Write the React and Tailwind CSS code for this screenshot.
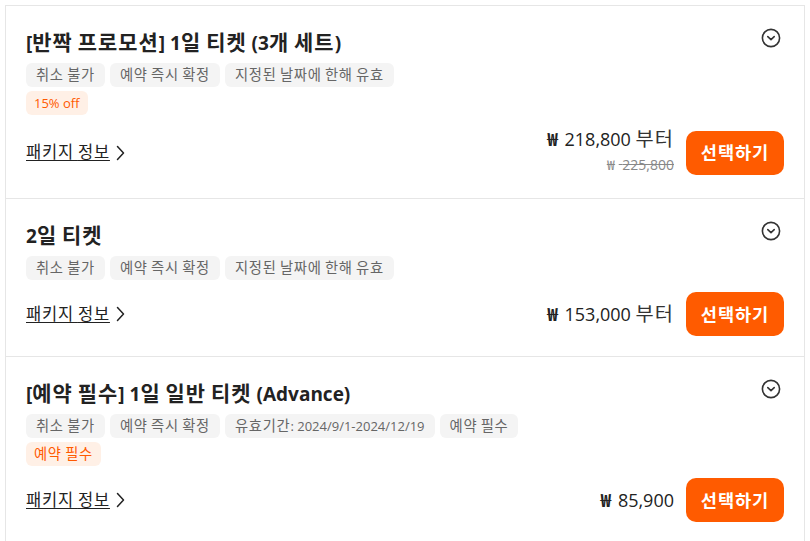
const FONT = { fontFamily: '"Open Sans", "Noto Sans CJK KR", sans-serif' };

const packages = [
    {
        title: '[반짝 프로모션] 1일 티켓 (3개 세트)',
        tags: ['취소 불가', '예약 즉시 확정', '지정된 날짜에 한해 유효'],
        promo: '15% off',
        price: '218,800',
        from: true,
        original: '225,800',
    },
    {
        title: '2일 티켓',
        tags: ['취소 불가', '예약 즉시 확정', '지정된 날짜에 한해 유효'],
        price: '153,000',
        from: true,
    },
    {
        title: '[예약 필수] 1일 일반 티켓 (Advance)',
        tags: ['취소 불가', '예약 즉시 확정', '유효기간: 2024/9/1-2024/12/19', '예약 필수'],
        promo: '예약 필수',
        price: '85,900',
    },
];

// hangul in the fallback font runs narrow, widen it a bit to match
function Ko({ children }) {
    const parts = String(children).split(/([가-힣]+)/);
    return parts.map((p, i) =>
        /[가-힣]/.test(p) ? (
            <span key={i} className="text-[1.1em] tracking-[0.05em]">{p}</span>
        ) : (
            <span key={i}>{p}</span>
        )
    );
}

function CircleChevron() {
    return (
        <svg width="20" height="20" viewBox="0 0 20 20" fill="none" stroke="#333" strokeWidth="1.6" strokeLinecap="round" strokeLinejoin="round">
            <circle cx="10" cy="10" r="8.6" />
            <path d="M6.8 8.6 10 11.6 13.2 8.6" />
        </svg>
    );
}

function PackageCard({ pkg }) {
    return (
        <div className="border-b border-[#e6e6e6] px-5 pt-6 pb-5">
            <div className="flex h-6 items-start justify-between">
                <h3 className="h-6 text-[19px] leading-6 font-bold text-[#222] whitespace-nowrap"><Ko>{pkg.title}</Ko></h3>
                <div className="mr-[3px] -mt-[2px]">
                    <CircleChevron />
                </div>
            </div>

            <div className="mt-[9px] flex flex-wrap gap-[5px]">
                {pkg.tags.map((t, i) => (
                    <span key={i} className="h-6 px-2.5 rounded-md bg-[#f4f4f4] text-[13px] leading-6 text-[#666] whitespace-nowrap">
                        <Ko>{t}</Ko>
                    </span>
                ))}
            </div>
            {pkg.promo && (
                <div className="mt-1 flex">
                    <span className="h-6 px-2 rounded-md bg-[#fff0e6] text-[13px] leading-6 text-[#ff5a00]">
                        <Ko>{pkg.promo}</Ko>
                    </span>
                </div>
            )}

            <div className="mt-3 flex items-center justify-between">
                <a className="flex items-center gap-1.5 text-[15px] text-[#222] cursor-pointer">
                    <span className="underline underline-offset-[2px] decoration-1"><Ko>패키지 정보</Ko></span>
                    <svg width="9" height="16" viewBox="0 0 9 16" fill="none" stroke="#222" strokeWidth="1.5" strokeLinecap="round" strokeLinejoin="round">
                        <path d="M1.5 1.5 7.5 8 1.5 14.5" />
                    </svg>
                </a>
                <div className="flex items-center gap-3">
                    <div className="flex flex-col items-end">
                        <div className="h-6 text-[18px] leading-6 text-[#222] whitespace-nowrap">
                            <span className="font-bold mr-0.5">₩</span> <span className="font-medium">{pkg.price}</span>
                            {pkg.from && <span className="font-normal text-[#333]"> <Ko>부터</Ko></span>}
                        </div>
                        {pkg.original && (
                            <div className="h-[27px] text-[14px] leading-[27px] text-[#888] line-through whitespace-nowrap">
                                <span className="mr-1">₩</span> {pkg.original}
                            </div>
                        )}
                    </div>
                    <button className="h-11 w-[98px] rounded-[10px] bg-[#ff5b00] text-white text-[16px] font-bold">
                        <Ko>선택하기</Ko>
                    </button>
                </div>
            </div>
        </div>
    );
}

export default function App() {
    return (
        <div className="min-h-screen bg-white pl-[5px] pt-[5px]" style={FONT}>
            <div className="w-[800px] border-l border-r border-t border-[#e6e6e6]">
                {packages.map((p, i) => (
                    <PackageCard key={i} pkg={p} />
                ))}
            </div>
        </div>
    );
}
